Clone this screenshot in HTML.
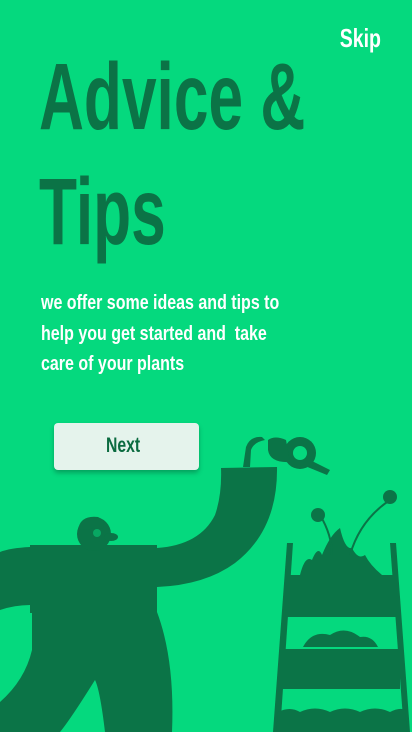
<!DOCTYPE html>
<html><head><meta charset="utf-8"><style>
html,body{margin:0;padding:0}
body{width:412px;height:732px;background:#05d97e;position:relative;overflow:hidden;font-family:"Liberation Sans",sans-serif;font-weight:bold}
.t{position:absolute;white-space:nowrap;line-height:1;transform-origin:0 0}
.h{color:#0b7346;font-size:95px;transform:scaleX(0.655)}
.b{color:#fff;font-size:20px;transform:scaleX(0.8);left:41px}
.btn{position:absolute;left:54px;top:423px;width:145px;height:47px;background:#e5f3ec;border-radius:4px;box-shadow:0 3px 5px rgba(0,0,0,.25)}
</style></head><body>
<div class="t" style="right:31px;top:25px;color:#fff;font-size:26px;transform:scaleX(0.75);transform-origin:100% 0">Skip</div>
<div class="t h" style="left:39px;top:50px">Advice &amp;</div>
<div class="t h" style="left:39px;top:165px">Tips</div>
<div class="t b" style="top:293px">we offer some ideas and tips to</div>
<div class="t b" style="top:324px">help you get started and&nbsp; take</div>
<div class="t b" style="top:354px">care of your plants</div>
<div class="btn"></div>
<div class="t" style="left:106px;top:435px;color:#0b6b40;font-size:21px;transform:scaleX(0.75)">Next</div>
<svg width="412" height="732" style="position:absolute;left:0;top:0">
<g fill="#0b7447">
<path d="M221 468 L277 467 Q278 530 235 563 Q205 585 157 587 L157 548 Q200 545 215 515 Q222 495 221 468Z"/>
<rect x="30" y="545" width="127" height="68"/>
<path d="M30 547 Q10 548 0 552 L0 610 Q15 605 30 605Z"/>
<path d="M32 612 L157 612 Q175 660 172 732 L105 732 Q100 690 95 680 Q70 720 60 732 L0 732 L0 702 Q25 680 32 650Z"/>
<circle cx="94" cy="534" r="17"/>
<path d="M78 530 Q80 515 98 517 Q105 520 103 528Z"/>
<ellipse cx="111" cy="537" rx="7" ry="4"/>
<circle cx="300" cy="453" r="16"/>
<path d="M310 460 L330 470 L327 475 L305 466Z"/>
<path d="M268 450 Q270 463 290 462 L286 440 Q275 435 268 440Z"/>
<path d="M243 467 L246 447 Q250 436 262 437 L265 440 Q254 442 251 450 L250 467Z"/>
<path d="M287 543 L293 543 L280 732 L273 732Z"/>
<path d="M390 543 L396 543 L410 732 L404 732Z"/>
<rect x="285" y="575" width="112" height="42"/>
<rect x="282" y="649" width="118" height="40"/>
<path d="M278 712 Q290 706 300 712 Q315 705 330 712 Q345 705 360 712 Q375 705 390 712 Q400 707 405 710 L407 732 L276 732Z"/>
<path d="M303 647 Q312 630 330 635 Q345 625 360 637 Q372 635 378 647Z"/>
<path d="M300 575 Q305 555 312 560 Q318 545 322 555 Q330 535 340 528 Q345 550 352 548 Q358 560 365 555 Q370 565 382 575Z"/>
<path d="M332 555 Q332 535 320 515" stroke="#0b7447" stroke-width="2" fill="none"/>
<path d="M350 555 Q360 520 390 500" stroke="#0b7447" stroke-width="2" fill="none"/>
<circle cx="318" cy="515" r="7"/>
<circle cx="390" cy="497" r="7"/>
</g>
<circle cx="300" cy="453" r="7" fill="#05d97e"/>
<circle cx="97" cy="533" r="4" fill="#05d97e" opacity=".5"/>
</svg>
</body></html>
